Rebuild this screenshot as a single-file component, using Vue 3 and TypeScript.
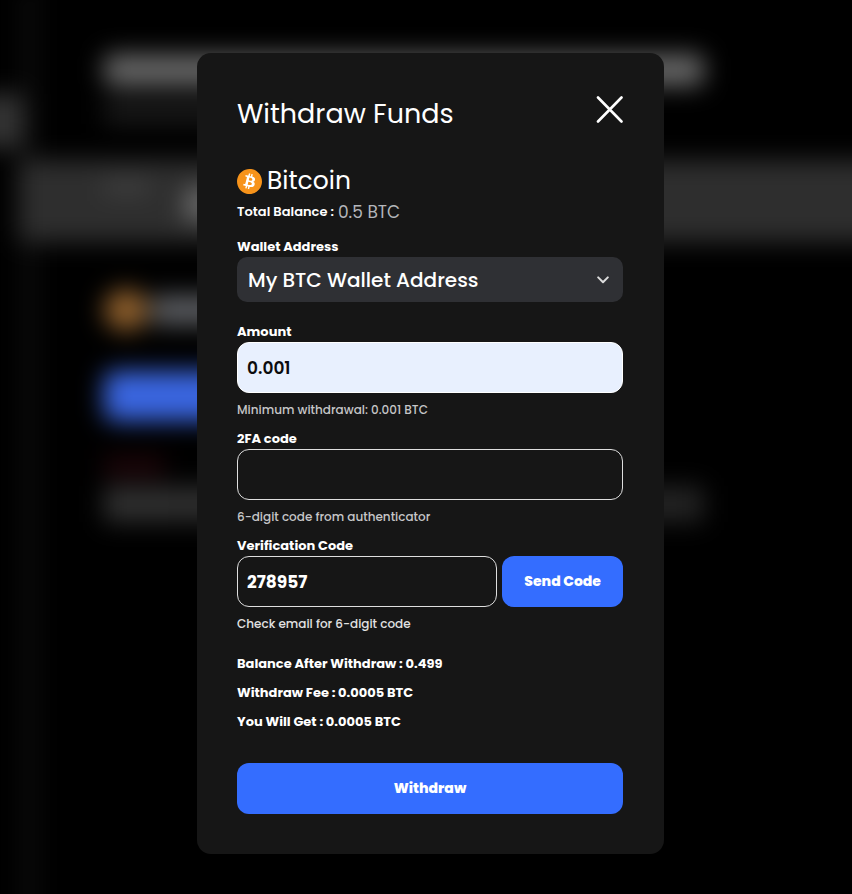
<script setup lang="ts">
import { ref } from 'vue'

interface SummaryRow {
  label: string
  value: string
}

const wallets: string[] = ['My BTC Wallet Address']
const wallet = ref<string>(wallets[0])
const amount = ref<string>('0.001')
const twoFactorCode = ref<string>('')
const verificationCode = ref<string>('278957')

const summary: SummaryRow[] = [
  { label: 'Balance After Withdraw', value: '0.499' },
  { label: 'Withdraw Fee', value: '0.0005 BTC' },
  { label: 'You Will Get', value: '0.0005 BTC' },
]
</script>

<template>
  <div class="page">
    <div class="scene" aria-hidden="true">
      <div class="rail"><div class="rail-item"></div></div>
      <div class="scene-main">
        <div class="scene-title"></div>
        <div class="scene-subtitle"></div>
        <div class="scene-band"><span class="band-text"></span><span class="band-value"></span></div>
        <div class="scene-coin"><span class="coin-dot"></span><span class="coin-name"></span></div>
        <div class="scene-button"></div>
        <div class="scene-alert"></div>
        <div class="scene-note"></div>
      </div>
    </div>

    <main class="overlay">
      <form class="modal" role="dialog" aria-labelledby="modal-title" @submit.prevent>
        <header class="modal-header">
          <h1 id="modal-title">Withdraw Funds</h1>
          <button class="close" type="button" aria-label="Close">
            <svg viewBox="0 0 27 27" width="27" height="27">
              <path d="M2 1.5L25.5 25.5M25.5 1.5L2 25.5" />
            </svg>
          </button>
        </header>

        <div class="coin">
          <svg class="coin-icon" viewBox="0 0 24 24" width="25" height="25" aria-hidden="true">
            <circle cx="12" cy="12" r="10" fill="#fff" />
            <path
              fill="#f7931a"
              d="M23.638 14.904c-1.602 6.43-8.113 10.34-14.542 8.736C2.67 22.05-1.244 15.525.362 9.105 1.962 2.67 8.475-1.243 14.9.358c6.43 1.605 10.342 8.115 8.738 14.548v-.002zm-6.35-4.613c.24-1.59-.974-2.45-2.64-3.03l.54-2.153-1.315-.33-.525 2.107c-.345-.087-.705-.167-1.064-.25l.526-2.127-1.32-.33-.54 2.165c-.285-.067-.565-.132-.84-.2l-1.815-.45-.35 1.407s.975.225.955.236c.535.136.63.486.615.766l-1.477 5.92c-.075.166-.24.406-.614.314.015.02-.96-.24-.96-.24l-.66 1.51 1.71.426.93.242-.54 2.19 1.32.327.54-2.17c.36.1.705.19 1.05.273l-.51 2.154 1.32.33.545-2.19c2.24.427 3.93.257 4.64-1.774.57-1.637-.03-2.58-1.217-3.196.854-.193 1.5-.76 1.68-1.93h.01zm-3.01 4.22c-.404 1.64-3.157.75-4.05.53l.72-2.9c.896.23 3.757.67 3.33 2.37zm.41-4.24c-.37 1.49-2.662.735-3.405.55l.654-2.64c.744.18 3.137.524 2.75 2.084v.006z"
            />
          </svg>
          <h2>Bitcoin</h2>
        </div>
        <p class="balance"><strong>Total Balance :</strong><span>0.5 BTC</span></p>

        <div class="field wallet-field">
          <label for="wallet">Wallet Address</label>
          <div class="select-box">
            <select id="wallet" v-model="wallet">
              <option v-for="item in wallets" :key="item">{{ item }}</option>
            </select>
            <svg class="chevron" viewBox="0 0 12 8" width="12" height="8" aria-hidden="true">
              <path d="M1.2 1.4L6 6.2L10.8 1.4" />
            </svg>
          </div>
        </div>

        <div class="fields">
          <div class="field">
            <label for="amount">Amount</label>
            <input id="amount" v-model="amount" class="filled" type="text" inputmode="decimal" />
            <p class="hint">Minimum withdrawal: 0.001 BTC</p>
          </div>

          <div class="field">
            <label for="two-factor">2FA code</label>
            <input id="two-factor" v-model="twoFactorCode" type="text" inputmode="numeric" />
            <p class="hint">6-digit code from authenticator</p>
          </div>

          <div class="field">
            <label for="verification">Verification Code</label>
            <div class="code-row">
              <input id="verification" v-model="verificationCode" type="text" inputmode="numeric" />
              <button class="primary send" type="button">Send Code</button>
            </div>
            <p class="hint bright">Check email for 6-digit code</p>
          </div>
        </div>

        <div class="summary">
          <p v-for="row in summary" :key="row.label">{{ row.label }} : {{ row.value }}</p>
        </div>

        <button class="primary submit" type="submit">Withdraw</button>
      </form>
    </main>
  </div>
</template>

<style>
body {
  background: #000;
}
</style>

<style scoped>
.page,
.page * {
  box-sizing: border-box;
}

.page {
  position: relative;
  min-height: 100vh;
  overflow: hidden;
  background: #000;
  color: #fff;
  font-family: Poppins, Inter, "Liberation Sans", sans-serif;
}

h1,
h2,
p {
  margin: 0;
  font-weight: 400;
}

/* Blurred page behind the dialog */
.scene {
  position: absolute;
  inset: -40px -40px -40px 0;
  display: flex;
  padding-top: 40px;
  filter: blur(12px);
}

.rail {
  width: 22px;
  padding-top: 94px;
  margin: -40px -14px 0 0;
  border-top: 40px solid transparent;
  border-right: 14px solid #0e0e0e;
  box-sizing: content-box;
}

.rail-item {
  height: 54px;
  margin-left: -20px;
  background: #343434;
}

.scene-main {
  flex: 1;
  display: flex;
  flex-direction: column;
  align-items: flex-start;
  padding-top: 54px;
}

.scene-main > * {
  margin-left: 82px;
}

.scene-title {
  width: 600px;
  height: 32px;
  border-radius: 8px;
  background: #666;
}

.scene-subtitle {
  width: 400px;
  height: 26px;
  margin-top: 12px;
  background: #191919;
}

.scene-main > .scene-band {
  align-self: stretch;
  display: flex;
  height: 82px;
  margin: 36px 0 0 -4px;
  padding: 20px 0 0 86px;
  background: #2e2e2e;
}

.band-text {
  width: 46px;
  height: 14px;
  background: #424242;
}

.band-value {
  width: 60px;
  height: 32px;
  margin: 8px 0 0 34px;
  background: #686868;
}

.scene-coin {
  display: flex;
  align-items: center;
  gap: 4px;
  margin-top: 47px;
}

.coin-dot {
  width: 44px;
  height: 42px;
  border-radius: 50%;
  background: #8e5f2c;
}

.coin-name {
  width: 120px;
  height: 30px;
  background: #5a5c60;
}

.scene-button {
  width: 300px;
  height: 50px;
  margin-top: 40px;
  border-radius: 10px;
  background: #3a66e0;
}

.scene-alert {
  width: 60px;
  height: 18px;
  margin-top: 36px;
  background: #22060a;
}

.scene-note {
  width: 600px;
  height: 36px;
  margin-top: 11px;
  background: linear-gradient(90deg, #303030, #222);
}

/* Dialog */
.overlay {
  position: relative;
  display: flex;
  align-items: center;
  justify-content: center;
  min-height: 100vh;
  padding: 53px 0 40px 9px;
}

.modal {
  width: 100%;
  max-width: 467px;
  padding: 40px 41px 40px 40px;
  border-radius: 14px;
  background: #161616;
}

.modal-header {
  display: flex;
  align-items: flex-start;
  justify-content: space-between;
}

h1 {
  font-size: 27px;
  line-height: 42px;
}

button {
  border: 0;
  color: #fff;
  font-family: inherit;
  cursor: pointer;
}

.close {
  display: flex;
  align-items: center;
  height: 33px;
  padding: 0;
  background: none;
}

.close path {
  fill: none;
  stroke: #fff;
  stroke-width: 2.6;
  stroke-linecap: round;
}

.coin {
  display: flex;
  align-items: center;
  gap: 5px;
  margin-top: 26px;
}

h2 {
  font-size: 25px;
  line-height: 40px;
}

.balance {
  display: flex;
  gap: 4px;
  font-size: 17px;
  line-height: 22px;
}

.balance strong {
  font-size: 13px;
  font-weight: 600;
}

.balance span {
  color: #b4b6bb;
}

.field {
  display: flex;
  flex-direction: column;
}

label {
  font-size: 13px;
  font-weight: 700;
  line-height: 21px;
}

.wallet-field {
  margin-top: 13px;
}

.select-box {
  position: relative;
  display: flex;
}

select {
  flex: 1;
  min-width: 0;
  height: 45px;
  padding: 0 36px 0 11px;
  border: 0;
  border-radius: 10px;
  appearance: none;
  background: #2f3034;
  color: #fff;
  font-family: inherit;
  font-size: 20px;
  font-weight: 500;
}

.chevron {
  position: absolute;
  top: 19px;
  right: 14px;
  pointer-events: none;
}

.chevron path {
  fill: none;
  stroke: #dcdcdc;
  stroke-width: 2;
  stroke-linecap: round;
  stroke-linejoin: round;
}

.fields {
  display: flex;
  flex-direction: column;
  gap: 8px;
  margin-top: 19px;
}

input {
  width: 100%;
  min-width: 0;
  height: 51px;
  padding: 0 9px;
  border: 1px solid #dedede;
  border-radius: 12px;
  background: transparent;
  color: #fff;
  font-family: inherit;
  font-size: 17px;
  font-weight: 700;
}

input.filled {
  border-color: #fff;
  background: #e8f0fe;
  color: #0c0c0e;
  font-weight: 600;
}

.hint {
  margin-top: 7px;
  color: #c6c6c8;
  font-size: 12px;
  font-weight: 500;
  line-height: 20px;
}

.hint.bright {
  color: #e2e2e2;
}

.code-row {
  display: flex;
  gap: 5px;
}

.primary {
  height: 51px;
  border-radius: 12px;
  background: #346dff;
  font-size: 14px;
  font-weight: 800;
}

.send {
  flex: none;
  padding: 0 22px;
}

.summary {
  margin-top: 15px;
}

.summary p {
  font-size: 13px;
  font-weight: 700;
  line-height: 29px;
}

.submit {
  display: block;
  width: 100%;
  margin-top: 27px;
}
</style>
